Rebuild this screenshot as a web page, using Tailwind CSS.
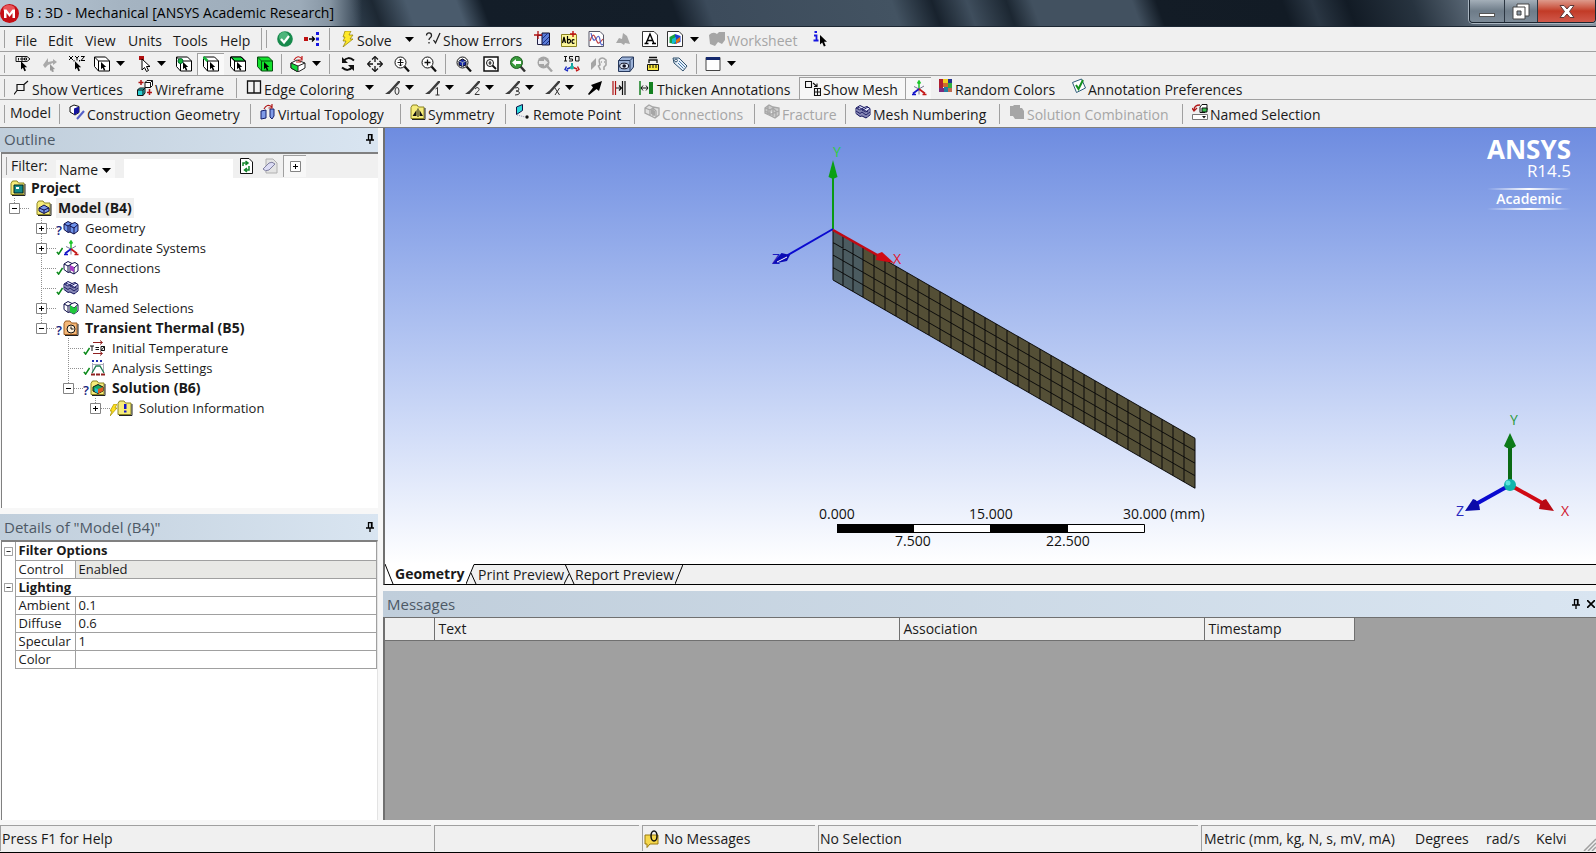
<!DOCTYPE html>
<html lang="en">
<head>
<meta charset="utf-8">
<title>B : 3D - Mechanical [ANSYS Academic Research]</title>
<script src="https://cdn.jsdelivr.net/npm/@tailwindcss/browser@4"></script>
</head>
<body class="flex min-h-screen flex-col bg-[#f0f0f0] font-['Open_Sans','Noto_Sans',sans-serif] text-[14px] leading-5 text-[#1a1a1a]">

<svg class="hidden" aria-hidden="true">
  <symbol id="drop" viewBox="0 0 9 5"><path d="M0 0h9L4.500 5z" fill="#000"/></symbol>
  <symbol id="cur" viewBox="0 0 8 12"><path d="M0 0v9.500l2.200-2 1.700 4 1.800-.8-1.700-3.900h3z" fill="#000"/></symbol>
  <symbol id="plus" viewBox="0 0 11 11"><path d="M.5.5h10v10H.5z" fill="#fff" stroke="#848484"/><path d="M3 5.500h5M5.500 3v5" stroke="#000"/></symbol>
  <symbol id="minus" viewBox="0 0 11 11"><path d="M.5.5h10v10H.5z" fill="#fff" stroke="#848484"/><path d="M3 5.500h5" stroke="#000"/></symbol>
  <symbol id="tick" viewBox="0 0 8 9"><path d="M1 5.500 3 8 7.500 1" fill="none" stroke="#0b8a1a" stroke-width="1.800"/></symbol>
  <symbol id="pin" viewBox="0 0 8 10"><path d="M2 .5h4v5M2.500 0v6M5.500 0v6M0 6h8M4 6v4" fill="none" stroke="#000" stroke-width="1.300"/></symbol>
  <symbol id="folder" viewBox="0 0 16 16"><path d="M1 3.500 2.500 1h4.500l1.500 2h5.500v11.500H1z" fill="#f6ec7a" stroke="#8a8320"/><path d="M15 4v11.500H2" fill="none" stroke="#222"/></symbol>
  <symbol id="cubes" viewBox="0 0 16 16"><path d="M1 4 5 1.500l4 2 3-1 3 2v6.500l-4 3-4-2-2 .5-4-3z" fill="currentColor" stroke="#10104a"/><path d="m1 4 4 2 4-2.500M5 6v6m2-6 4 2 4-3.500M11 8v6M7 5v7" fill="none" stroke="#10104a"/></symbol>
  <symbol id="meshcubes" viewBox="0 0 16 16"><path d="M1 4 5 1.500l4 2 3-1 3 2v6.500l-4 3-4-2-2 .5-4-3z" fill="#e4e6ff" stroke="#14145c"/><path d="m1 4 4 2 4-2.500M5 6v6m2-6 4 2 4-3.500M11 8v6M7 5v7M1 7l4 2.500L7 8l4 3 4-3M3 3v8M9 7v6M13 6v6M3 3l10 5M13 3 8 6" fill="none" stroke="#14145c" stroke-width=".9"/></symbol>
  <symbol id="triad" viewBox="0 0 16 16"><path d="M8 9V1M6.500 3.500 8 1l1.500 2.500" stroke="#1fc62c" stroke-width="1.500" fill="none"/><path d="M3 6.500 8 9l5-3M8 9v5.500" stroke="#668" stroke-width=".9" fill="none"/><path d="m8 9-6 4.500M1 14.500h4" stroke="#1414c8" stroke-width="1.700"/><path d="m8 9 6 4.500M11.500 14.500h4" stroke="#c41818" stroke-width="1.700"/></symbol>
  <symbol id="cubeframe" viewBox="0 0 16 16"><path d="M.5 1v9.500l4 4.500h11V5l-4-4z" fill="#fff" stroke="#000"/><path d="m.5 1 4 4h11M4.500 5v10" fill="none" stroke="#000"/></symbol>
  <symbol id="lens" viewBox="0 0 16 16"><circle cx="6.500" cy="6.500" r="5.500" fill="#fff" stroke="#111"/><path d="m10.500 10.500 4.500 5" stroke="#111" stroke-width="2.200"/></symbol>
  <symbol id="stroke" viewBox="0 0 16 16"><path d="M0 14h4.500L15 2.500V1h-2L4.500 10.500z" fill="#3c3c3c"/></symbol>
</svg>

<header class="flex h-[27px] shrink-0 items-start border-b border-[#1c2733] bg-[linear-gradient(to_right,#b9c8d6_0,#a5b4c2_120px,#9cabb9_300px,#8695a3_330px,#8695a300_362px),linear-gradient(70deg,#2f3e4d_335px,#1d2833_358px,#4a5b6c_390px,#4a5b6c_437px,#131d28_461px,#141e29_639px,#3c4b5b_672px,#435362_846px,#18222d_884px,#3f4e5d_917px,#1c2732_954px,#425160_978px,#425160_1072px,#131c26_1095px,#121b25_1213px,#2a3643_1241px,#121b25_1274px,#27333f_1335px,#5a6876_1390px,#8d98a3_100%)]">
  <svg class="mt-1 size-5 shrink-0" viewBox="0 0 20 20"><circle cx="9.500" cy="9.500" r="9.500" fill="#c40d14"/><ellipse cx="9" cy="5" rx="6" ry="4" fill="#e8555a"/><path d="M4 14V5.500h2.500l3 4 3-4H15V14h-2.500V9l-3 4-3-4v5z" fill="#fff"/></svg>
  <h1 class="ml-[5px] mt-[3px] flex-1 truncate text-[14px] text-black">B : 3D - Mechanical [ANSYS Academic Research]</h1>
  <div class="flex h-[23px] overflow-hidden rounded-b border border-t-0 border-[#1b2631] shadow-[0_0_0_1px_#a9b5c0]">
    <button aria-label="Minimize" class="flex w-[35px] items-end justify-center border-r border-[#2b3642] bg-linear-to-b from-[#a4afb9] via-[#6e7c89] to-[#7d8b98] pb-[5px]"><span class="h-[4px] w-4 border border-[#555] bg-white"></span></button>
    <button aria-label="Restore" class="flex w-[33px] items-center justify-center border-r border-[#2b3642] bg-linear-to-b from-[#a4afb9] via-[#6e7c89] to-[#7d8b98]"><svg class="h-[17px] w-[18px]" viewBox="0 0 18 17"><path d="M5 1h12v12H5z" fill="#fff" stroke="#444"/><path d="M1 4h12v12H1z" fill="#fff" stroke="#444"/><path d="M5 8h4v4H5z" fill="#8a97a3" stroke="#444"/></svg></button>
    <button aria-label="Close" class="flex w-[57px] items-center justify-center bg-linear-to-b from-[#dd9a8c] via-[#c23a26] to-[#d0584a]"><svg class="h-[13px] w-4" viewBox="0 0 16 13"><path d="M1 .5h4l3 3.500 3-3.500h4L10.500 6.500l4.500 6h-4L8 9l-3 3.500H1l4.500-6z" fill="#fff" stroke="#5b3a3a"/></svg></button>
  </div>
</header>

<!-- Menu and standard toolbar -->
<div class="flex h-[25px] shrink-0 items-center overflow-hidden border-b border-[#a0a0a0]">
  <span class="ml-1 h-[18px] w-px shrink-0 bg-[#a0a0a0]"></span>
  <nav class="ml-[10px] flex shrink-0 pt-1" aria-label="Menu">
    <button class="w-[33px] text-left">File</button><button class="w-[37px] text-left">Edit</button><button class="w-[43px] text-left">View</button><button class="w-[45px] text-left">Units</button><button class="w-[47px] text-left">Tools</button><button class="w-[41px] text-left">Help</button>
  </nav>
  <span class="h-[22px] w-px shrink-0 bg-[#a0a0a0]"></span><span class="ml-1 h-[18px] w-px shrink-0 bg-[#a0a0a0]"></span>
  <button aria-label="Solution status" class="ml-1 flex w-[27px] shrink-0 justify-center"><svg class="size-4" viewBox="0 0 16 16"><circle cx="8" cy="8" r="7.800" fill="#178a4c"/><circle cx="7" cy="6" r="5" fill="#4db67b"/><path d="m4 8 3 3.500L12 5" fill="none" stroke="#fff" stroke-width="2.200"/></svg></button>
  <button aria-label="Connections" class="flex w-[27px] shrink-0 justify-center"><svg class="size-4" viewBox="0 0 16 16"><path d="M0 6h4v4H0z" fill="#c01010"/><path d="M5 8h5M8 5.500 10.500 8 8 10.500" fill="none" stroke="#000" stroke-width="1.300"/><path d="M12 1h3v3h-3zM12 6.500h3v3h-3zM12 12h3v3h-3z" fill="#1515e0"/></svg></button>
  <span class="ml-1 h-[22px] w-px shrink-0 bg-[#a0a0a0]"></span>
  <button class="ml-[10px] flex w-[59px] shrink-0 items-center gap-px whitespace-nowrap"><svg class="size-4 shrink-0" viewBox="0 0 16 16"><path d="M5 0h6L9 4h4l-3 4h3L3 16l3-6H3l2-4H3z" fill="#ffe92b" stroke="#8d7b00" stroke-width=".7"/></svg><span class="pt-1">Solve</span></button>
  <button aria-label="Solve options" class="flex w-5 shrink-0 justify-center"><svg class="h-[5px] w-[9px]"><use href="#drop"/></svg></button>
  <button class="ml-1.5 flex w-[103px] shrink-0 items-center gap-0.5 whitespace-nowrap"><svg class="size-4 shrink-0" viewBox="0 0 16 16"><path d="M1.500 4.500c0-3.500 5-3.500 5 0C6.500 7 4 6.500 4 9M4 11v1.500M8.500 9l2 3 4.500-10" fill="none" stroke="#222" stroke-width="1.300"/></svg><span class="pt-1">Show Errors</span></button>
  <button aria-label="Section plane" class="flex w-[27px] shrink-0 justify-center"><svg class="size-4" viewBox="0 0 16 16"><path d="M3.500 4.500H9v9H3.500z" fill="#eef" stroke="#224"/><path d="M8 2h7.500v12H8z" fill="#5a7bd8" stroke="#113"/><path d="m8 8 6-6M8 13l7-7M11 14l4-4" stroke="#1a2f80"/><path d="M4 0v8M0 4h8" stroke="#b01010" stroke-width="1.300"/></svg></button>
  <button aria-label="Annotation" class="flex w-[27px] shrink-0 justify-center"><svg class="size-4" viewBox="0 0 16 16"><path d="M.5 3.500h15v12H.5z" fill="#fdf79a" stroke="#8a8320"/><path d="M1.500 12 3 6l1.500 6M2 10h2M6.500 5v7m0-3q3-1.500 3 1t-3 2M13.500 9q-2.500-1-2.500 1.500t2.500 1.500" fill="none" stroke="#000" stroke-width="1.200"/><path d="M12 0v6M9 3h6" stroke="#c01010" stroke-width="1.400"/></svg></button>
  <button aria-label="Chart" class="flex w-[27px] shrink-0 justify-center"><svg class="size-4" viewBox="0 0 16 16"><path d="M1 .5h11l3.500 3.500v11.500H1z" fill="#fff" stroke="#556"/><path d="M2 10Q5 1 7 6t3 6 5-4" fill="none" stroke="#c04040" stroke-width="1.200"/><path d="M3 2q2 10 5 6 3-6 4 1t3 4" fill="none" stroke="#5060c8" stroke-width="1.200"/></svg></button>
  <button aria-label="Comment" disabled class="flex w-[27px] shrink-0 justify-center"><svg class="size-4" viewBox="0 0 16 16"><path d="m1 12 3-5 3 1 1-6 4 3 3 8-5-1-1 2-3-2z" fill="#a8a8a8"/></svg></button>
  <button aria-label="Figure" class="flex w-[27px] shrink-0 justify-center"><svg class="size-4" viewBox="0 0 16 16"><path d="M.5.5H12l3.500 3.500v11.500H.5z" fill="#fff" stroke="#333"/><path d="M4 12.500 8 3l4 9.500M5.500 9.500h5M2.500 12.500h4M10 12.500h4" fill="none" stroke="#000" stroke-width="1.400"/></svg></button>
  <button aria-label="Image" class="flex w-6 shrink-0 justify-center"><svg class="size-4" viewBox="0 0 16 16"><path d="M.5.5H12l3.500 3.500v11.500H.5z" fill="#fff" stroke="#333"/><path d="m2.500 6 5.500-3v10l-5.500-1z" fill="#18a040"/><path d="m8 3 5.500 2v6L8 13z" fill="#2040d0"/><path d="m5 8 4-2v5l-4 2z" fill="#12bcd0"/><path d="m9 9 4-3v4l-4 3z" fill="#e07010"/></svg></button>
  <button aria-label="Image options" class="flex w-[14px] shrink-0 justify-center"><svg class="h-[5px] w-[9px]"><use href="#drop"/></svg></button>
  <button disabled class="ml-[7px] flex w-[94px] shrink-0 items-center gap-px whitespace-nowrap text-[#a6a6a6]"><svg class="h-4 w-[18px] shrink-0" viewBox="0 0 18 16"><path d="M1 4q4-4 8-1l2-2h6v8l-3 4-4-2-3 4-5-2z" fill="#a6a6a6"/></svg><span class="pt-1">Worksheet</span></button>
  <button aria-label="Selection information" class="ml-1 flex w-[27px] shrink-0 justify-center"><svg class="size-4" viewBox="0 0 16 16"><path d="M2.500 1H5M2 4.500h2.500v5M1.500 9.500h5" fill="none" stroke="#1515e0" stroke-width="1.800"/><use href="#cur" x="8" y="4" width="8" height="12"/></svg></button>
</div>

<!-- Graphics toolbar -->
<div class="flex h-6 shrink-0 items-center overflow-hidden border-b border-[#a0a0a0]">
  <span class="ml-1 h-[18px] w-px shrink-0 bg-[#a0a0a0]"></span>
  <button aria-label="Label" class="ml-1 flex w-[27px] shrink-0 justify-center"><svg class="size-4" viewBox="0 0 16 16"><path d="M1 .5h11l3 2.500-3 2.500H1zM3.500 2v2.500M6 2h2v2H6zM9.500 2h2v2h-2z" fill="none" stroke="#000" stroke-width=".9"/><use href="#cur" x="6" y="5" width="7" height="11"/></svg></button>
  <button aria-label="Direction" disabled class="flex w-[27px] shrink-0 justify-center"><svg class="size-4" viewBox="0 0 16 16"><path d="m1 9 5-7v4l5-1V3l4 3-4 3V7L6 9l-3 3z" fill="#aaa"/><path d="m8 8 5 5-2 .5 1 2-2 .5-1-2-1 1z" fill="#999"/></svg></button>
  <button aria-label="Coordinates" class="flex w-[27px] shrink-0 justify-center"><svg class="size-4" viewBox="0 0 16 16"><path d="m0 0 4 4M4 0 0 4M6 0l2 2 2-2M8 2v2.500M12 .5h3.500L12 4.500h4M5 4v1.500M10.500 4v1.500" fill="none" stroke="#000"/><use href="#cur" x="6" y="5" width="7" height="11"/></svg></button>
  <button aria-label="Select mode" class="flex w-6 shrink-0 justify-center"><svg class="size-4"><use href="#cubeframe"/><use href="#cur" x="7" y="6" width="6" height="9"/></svg></button>
  <button aria-label="Select mode options" class="flex w-3 shrink-0 justify-center"><svg class="h-[5px] w-[9px]"><use href="#drop"/></svg></button>
  <button aria-label="Select type" class="ml-[9px] flex w-5 shrink-0 justify-center"><svg class="size-4" viewBox="0 0 16 16"><path d="M2 0h5v4H2z" fill="#b01010"/><path d="M5 3v11l2.500-2.500 2 4 2-1-2-4H13z" fill="#fff" stroke="#000"/></svg></button>
  <button aria-label="Select type options" class="flex w-3 shrink-0 justify-center"><svg class="h-[5px] w-[9px]"><use href="#drop"/></svg></button>
  <button aria-label="Vertex" class="ml-[3px] flex w-[27px] shrink-0 justify-center"><svg class="size-4"><use href="#cubeframe"/><circle cx="4.500" cy="5" r="2.500" fill="#18b53a" stroke="#063"/><use href="#cur" x="7" y="6" width="6" height="9"/></svg></button>
  <button aria-label="Edge" aria-pressed="true" class="flex h-[22px] w-[27px] shrink-0 items-center justify-center border-l border-t border-[#a0a0a0] bg-[#f9f9f9]"><svg class="size-4"><use href="#cubeframe"/><path d="m.5 1 4 4" stroke="#18b53a" stroke-width="2.500"/><use href="#cur" x="7" y="6" width="6" height="9"/></svg></button>
  <button aria-label="Face" class="flex w-[27px] shrink-0 justify-center"><svg class="size-4"><use href="#cubeframe"/><path d="M1 1h10l4 4H5z" fill="#12d83a" stroke="#000"/><use href="#cur" x="7" y="6" width="6" height="9"/></svg></button>
  <button aria-label="Body" class="flex w-[27px] shrink-0 justify-center"><svg class="size-4" viewBox="0 0 16 16"><path d="M.5 1v9.500l4 4.500h11V5l-4-4z" fill="#12e02c" stroke="#064d10"/><path d="m.5 1 4 4h11M4.500 5v10" fill="none" stroke="#064d10"/><use href="#cur" x="7" y="6" width="6" height="9"/></svg></button>
  <span class="ml-[3px] h-5 w-px shrink-0 bg-[#a0a0a0]"></span>
  <button aria-label="Extend selection" class="ml-1 flex w-6 shrink-0 justify-center"><svg class="size-4" viewBox="0 0 16 16"><path d="m1 7 6-3 8 3v5l-7 4-7-4z" fill="#fff" stroke="#222"/><path d="m1 7 7 3v6l-7-4z" fill="#12d83a" stroke="#222"/><path d="M8 10l7-3" stroke="#222"/><path d="M4 4q4-6 8-1M12 0v4H8M6 6h5" fill="none" stroke="#c01818" stroke-width="1.200"/></svg></button>
  <button aria-label="Extend options" class="flex w-3 shrink-0 justify-center"><svg class="h-[5px] w-[9px]"><use href="#drop"/></svg></button>
  <span class="ml-[7px] h-5 w-px shrink-0 bg-[#a0a0a0]"></span>
  <button aria-label="Rotate" class="ml-1 flex w-[27px] shrink-0 justify-center"><svg class="size-4" viewBox="0 0 16 16"><path d="M3.500 5Q8-.5 14 4.500M12.500 11Q8 16.500 2 11.500" fill="none" stroke="#111" stroke-width="2"/><path d="M2 1v6h6zM14 15V9H8z" fill="#111"/></svg></button>
  <button aria-label="Pan" class="flex w-[27px] shrink-0 justify-center"><svg class="size-4" viewBox="0 0 16 16"><path d="M8 1v5M8 10v5M1 8h5M10 8h5" stroke="#111" stroke-width="1.300"/><path d="m5 3.500 3-3 3 3M5 12.500l3 3 3-3M3.500 5l-3 3 3 3M12.500 5l3 3-3 3" fill="none" stroke="#111" stroke-width="1.200"/></svg></button>
  <button aria-label="Zoom" class="flex w-[27px] shrink-0 justify-center"><svg class="size-4"><use href="#lens"/><path d="M6.500 3v7M3.500 6.500h6M5 4.500 6.500 3 8 4.500M5 8.500 6.500 10 8 8.500" fill="none" stroke="#111"/></svg></button>
  <button aria-label="Box zoom" class="flex w-[27px] shrink-0 justify-center"><svg class="size-4"><use href="#lens"/><path d="M6.500 3.500v6M3.500 6.500h6" stroke="#111" stroke-width="1.300"/></svg></button>
  <span class="ml-[3px] h-5 w-px shrink-0 bg-[#a0a0a0]"></span>
  <button aria-label="Zoom to fit" class="ml-1 flex w-[27px] shrink-0 justify-center"><svg class="size-4"><use href="#lens"/><path d="m3 5 3.500-2L10 5v4l-3.500 1.500L3 9z" fill="#1c2ca8" stroke="#001"/><path d="m3 5 3.500 1.500L10 5M6.500 6.500v4" fill="none" stroke="#9ab"/></svg></button>
  <button aria-label="Magnifier window" class="flex w-[27px] shrink-0 justify-center"><svg class="size-4" viewBox="0 0 16 16"><path d="M1 1h14v14H1z" fill="#fff" stroke="#111" stroke-width="1.500"/><circle cx="7" cy="7" r="3.500" fill="none" stroke="#111"/><path d="m9.500 9.500 3.500 3.500" stroke="#111" stroke-width="1.800"/><path d="M7 5v4M5.500 7h3" stroke="#111"/></svg></button>
  <button aria-label="Previous view" class="flex w-[27px] shrink-0 justify-center"><svg class="size-4" viewBox="0 0 16 16"><path d="m10.500 10.500 4.500 5" stroke="#333" stroke-width="2.400"/><circle cx="6.500" cy="6.500" r="6" fill="#3a9a3c" stroke="#1d5c20"/><path d="M2 6.500 6 3v2h5v3H6v2z" fill="#fff"/></svg></button>
  <button aria-label="Next view" disabled class="flex w-[27px] shrink-0 justify-center"><svg class="size-4" viewBox="0 0 16 16"><path d="m10.500 10.500 4.500 5" stroke="#a5a5a5" stroke-width="2.400"/><circle cx="6.500" cy="6.500" r="6" fill="#a5a5a5"/><path d="M11 6.500 7 3v2H2v3h5v2z" fill="#e8e8e8"/></svg></button>
  <button aria-label="Isometric view" class="flex w-[27px] shrink-0 justify-center"><svg class="size-4" viewBox="0 0 16 16"><path d="M1.500.5v4.500M0 .5h3M0 5h3M9 .5H5.500V3H8.500v2H5M11.500.5h3.500V5h-3.500z" fill="none" stroke="#111"/><path d="M8 11V7" stroke="#12a0a0" stroke-width="2"/><path d="m8 11-5 2M2.500 10.500l-1.500 3 3 1.500" stroke="#1a2ac0" fill="none" stroke-width="1.400"/><path d="m8 11 5 2M13.500 10.500l1.500 3-3 1.500" stroke="#c01818" fill="none" stroke-width="1.400"/><circle cx="8" cy="11.500" r="2" fill="#18b8a8"/></svg></button>
  <button aria-label="Look at" disabled class="flex w-[27px] shrink-0 justify-center"><svg class="size-4" viewBox="0 0 16 16"><path d="m0 7 5-5v7l-5 5z" fill="#a5a5a5"/><path d="M8 4q3-4 7 0v5l-2 2v3M8 4l1 5-1.500 1 2 4M10 6h1M13 6h1" fill="none" stroke="#a5a5a5" stroke-width="1.600"/></svg></button>
  <button aria-label="Manage views" class="flex w-[27px] shrink-0 justify-center"><svg class="size-4" viewBox="0 0 16 16"><path d="M.5 4.500 4 1h11.500v10L12 15.500H.5z" fill="#9db3d8" stroke="#26385c"/><path d="M.5 4.500H12v11M12 4.500 15.500 1" fill="none" stroke="#26385c"/><ellipse cx="6.200" cy="10" rx="4.500" ry="2.800" fill="#dfe8f7" stroke="#112"/><circle cx="6.200" cy="10" r="1.800" fill="#112"/></svg></button>
  <button aria-label="Rescale annotation" class="flex w-[27px] shrink-0 justify-center"><svg class="size-4" viewBox="0 0 16 16"><path d="M4 7V4h8v3M4 1.500h8" fill="none" stroke="#111" stroke-width="1.300"/><path d="M2.500 8.500h11v6h-11z" fill="#fbe93c" stroke="#111"/><path d="M5 9v3M8 9v3M11 9v3" stroke="#111"/></svg></button>
  <button aria-label="Tags" class="flex w-[27px] shrink-0 justify-center"><svg class="size-4" viewBox="0 0 16 16"><path d="m1 2 6 0 8 8-4 5-9-8z" fill="#e7f1fb" stroke="#30506c"/><circle cx="4" cy="4.500" r="1.400" fill="#fff" stroke="#30506c"/><path d="m7 5 6 6M6 7l5.500 5.500" stroke="#4a7aa8"/></svg></button>
  <span class="ml-[3px] h-5 w-px shrink-0 bg-[#a0a0a0]"></span>
  <button aria-label="Viewports" class="ml-1 flex w-6 shrink-0 justify-center"><svg class="size-4" viewBox="0 0 16 16"><path d="M1 1.500h14v13H1z" fill="#fff" stroke="#444"/><path d="M1 1h14v3H1z" fill="#14286c"/></svg></button>
  <button aria-label="Viewport options" class="flex w-3 shrink-0 justify-center"><svg class="h-[5px] w-[9px]"><use href="#drop"/></svg></button>
</div>

<!-- Edge graphics toolbar -->
<div class="flex h-6 shrink-0 items-center overflow-hidden whitespace-nowrap border-b border-[#a0a0a0]">
  <span class="ml-1 h-[18px] w-px shrink-0 bg-[#a0a0a0]"></span>
  <button class="ml-[9px] flex w-[123px] shrink-0 items-center gap-0.5"><svg class="size-4 shrink-0" viewBox="0 0 16 16"><path d="M3 4.500h7v6H3zM10 4.500l4-3.500M0 14.500l3-4" fill="none" stroke="#111" stroke-width="1.200"/></svg><span class="pt-1">Show Vertices</span></button>
  <button class="flex w-[95px] shrink-0 items-center gap-0.5"><svg class="size-4 shrink-0" viewBox="0 0 16 16"><path d="M8 2.500 10 .5h5.500v5l-2 2H8zM8 2.500h5.500v5M13.500 2.500l2-2" fill="#fff" stroke="#111"/><path d="m.5 10 2-2H8v5l-2 2.500H.5z" fill="#2ad0d4" stroke="#111"/><path d="M.5 10H6v5.500M6 10l2-2" fill="none" stroke="#111"/><path d="M4 0v5M1.500 2.500h5M12.500 9v6M10 12.500h5" stroke="#b01414" stroke-width="1.500"/></svg><span class="pt-1">Wireframe</span></button>
  <span class="ml-1 h-5 w-px shrink-0 bg-[#a0a0a0]"></span>
  <button class="ml-[9px] flex w-[117px] shrink-0 items-center gap-0.5"><svg class="mb-0.5 size-4 shrink-0" viewBox="0 0 16 16"><path d="M1.500 2h13v12h-13zM8 2v12" fill="none" stroke="#111" stroke-width="1.300"/></svg><span class="pt-1">Edge Coloring</span></button>
  <button aria-label="Edge coloring options" class="flex w-3 shrink-0 justify-center"><svg class="h-[5px] w-[9px]"><use href="#drop"/></svg></button>
  <button aria-label="Edges with no faces" class="ml-[7px] flex w-[21px] shrink-0 justify-center"><svg class="size-4"><use href="#stroke"/><ellipse cx="12" cy="11" rx="2" ry="3.500" fill="none" stroke="#333"/></svg></button><button aria-label="Options" class="flex w-3 shrink-0 justify-center"><svg class="h-[5px] w-[9px]"><use href="#drop"/></svg></button>
  <button aria-label="Edges with one face" class="ml-[7px] flex w-[21px] shrink-0 justify-center"><svg class="size-4"><use href="#stroke"/><path d="m10.500 9 2-1.500V15M10.500 15h4" fill="none" stroke="#333"/></svg></button><button aria-label="Options" class="flex w-3 shrink-0 justify-center"><svg class="h-[5px] w-[9px]"><use href="#drop"/></svg></button>
  <button aria-label="Edges with two faces" class="ml-[7px] flex w-[21px] shrink-0 justify-center"><svg class="size-4"><use href="#stroke"/><path d="M10 9q2-3 4-.5c1 2-3 4-4 6h4.500" fill="none" stroke="#333"/></svg></button><button aria-label="Options" class="flex w-3 shrink-0 justify-center"><svg class="h-[5px] w-[9px]"><use href="#drop"/></svg></button>
  <button aria-label="Edges with three faces" class="ml-[7px] flex w-[21px] shrink-0 justify-center"><svg class="size-4"><use href="#stroke"/><path d="M10 8q4-1.500 4 1t-3 2q3.500 0 3.500 2t-4.500 2" fill="none" stroke="#333"/></svg></button><button aria-label="Options" class="flex w-3 shrink-0 justify-center"><svg class="h-[5px] w-[9px]"><use href="#drop"/></svg></button>
  <button aria-label="Edges with many faces" class="ml-[7px] flex w-[21px] shrink-0 justify-center"><svg class="size-4"><use href="#stroke"/><path d="m10 8 4.500 7M14.500 8 10 15" fill="none" stroke="#333"/></svg></button><button aria-label="Options" class="flex w-3 shrink-0 justify-center"><svg class="h-[5px] w-[9px]"><use href="#drop"/></svg></button>
  <button aria-label="Thick arrow" class="ml-1.5 flex w-[27px] shrink-0 justify-center"><svg class="size-4" viewBox="0 0 16 16"><path d="m15 1-3 10-2.500-2L2 15l-1-1 5-6.500L4 5z" fill="#000"/></svg></button>
  <button aria-label="Edge direction" class="flex w-[21px] shrink-0 justify-center"><svg class="size-4" viewBox="0 0 16 16"><path d="M2 1v14M4.500 1v14" stroke="#b01414" stroke-width="1.200"/><path d="M11.500 1v14M14 1v14M5 8h5M8 5.500 10.500 8 8 10.500" fill="none" stroke="#111" stroke-width="1.200"/></svg></button>
  <button class="ml-[9px] flex w-[161px] shrink-0 items-center gap-[3px]"><svg class="size-4 shrink-0" viewBox="0 0 16 16"><path d="M2 1v14" stroke="#148020" stroke-width="1.500"/><path d="M3 8h7M5 5.500 3 8l2 2.500M8 5.500 10 8l-2 2.500" fill="none" stroke="#111"/><path d="M11 2h4v12h-4z" fill="#148020"/></svg><span class="pt-1">Thicken Annotations</span></button>
  <button aria-pressed="true" class="flex h-[22px] w-[106px] shrink-0 items-center gap-0.5 border-l border-t border-[#a0a0a0] bg-[#f7f7f7] pl-[5px]"><svg class="size-4 shrink-0" viewBox="0 0 16 16"><path d="M.5 1.500h6v6h-6zM9.500 8.500h6v7h-6zM9.500 12h6M12.500 8.500v7M8 3l4 3.500M12 3.500v3H9" fill="none" stroke="#111" stroke-width="1.100"/></svg><span class="pt-1">Show Mesh</span></button>
  <button aria-label="Show coordinate systems" aria-pressed="true" class="flex h-[22px] w-[26px] shrink-0 items-center justify-center border-l border-t border-[#a0a0a0] bg-[#f7f7f7]"><svg class="size-4"><use href="#triad"/></svg></button>
  <button class="ml-2 flex w-[132px] shrink-0 items-center gap-[3px]"><svg class="mb-1 size-[13px] shrink-0" viewBox="0 0 13 13"><path d="M0 0h4v13H0z" fill="#b02030"/><path d="M4 0h5v4H4z" fill="#f0d020"/><path d="M9 0h4v4H9z" fill="#203090"/><path d="M4 4h5v4H4z" fill="#d06a30"/><path d="M9 4h4v5H9z" fill="#30b040"/><path d="M0 9h5v4H0z" fill="#7a2a80"/><path d="M5 8h4v5H5z" fill="#2080a0"/><path d="M9 9h4v4H9z" fill="#c06a50"/></svg><span class="pt-1">Random Colors</span></button>
  <button class="flex shrink-0 items-center gap-px"><svg class="mb-1 size-4 shrink-0" viewBox="0 0 16 16"><path d="m1.500 4.500 9-3.500 4 9-9 4.500z" fill="#fff" stroke="#2a5a78"/><path d="m5 7 2.500 4L12 2" fill="none" stroke="#12901e" stroke-width="2"/></svg><span class="pt-1">Annotation Preferences</span></button>
</div>

<!-- Context toolbar -->
<div class="flex h-[28px] shrink-0 items-center overflow-hidden whitespace-nowrap border-b border-[#808080]">
  <span class="ml-1 h-[18px] w-px shrink-0 bg-[#a0a0a0]"></span>
  <span class="ml-[5px] w-[49px] shrink-0 pb-0.5">Model</span>
  <span class="h-5 w-px shrink-0 bg-[#a0a0a0]"></span>
  <button class="ml-[9px] flex w-[181px] shrink-0 items-center gap-0.5"><svg class="mb-1 size-4 shrink-0" viewBox="0 0 16 16"><path d="m1 3 4-2 5 1.500v6L6 11 1 8z" fill="#fff" stroke="#111"/><path d="m5 4.500 5-2v6L5 11z" fill="#1414a0"/><path d="m8 15 7-8" stroke="#5560c8" stroke-width="2"/></svg><span class="pt-[3px]">Construction Geometry</span></button>
  <span class="h-5 w-px shrink-0 bg-[#a0a0a0]"></span>
  <button class="ml-[9px] flex w-[140px] shrink-0 items-center gap-0.5"><svg class="mb-1 size-4 shrink-0" viewBox="0 0 16 16"><path d="m1 7 5-1v8l-5 1zM10 5l4 0v7l-2 3-2-2z" fill="#7f9be8" stroke="#14206c"/><path d="M4 5q3-6 8-2M12 0v4H8.500" fill="none" stroke="#b01818" stroke-width="1.200"/></svg><span class="pt-[3px]">Virtual Topology</span></button>
  <span class="h-5 w-px shrink-0 bg-[#a0a0a0]"></span>
  <button class="ml-[9px] flex w-[95px] shrink-0 items-center gap-0.5"><svg class="mb-1 size-4 shrink-0"><use href="#folder"/><path d="m2.500 12 4-6v6zM13 12 9.500 6v6z" fill="#111"/><path d="M8 4.500V13" stroke="#111"/></svg><span class="pt-[3px]">Symmetry</span></button>
  <span class="h-5 w-px shrink-0 bg-[#a0a0a0]"></span>
  <button class="ml-[9px] flex w-[119px] shrink-0 items-center gap-0.5"><svg class="mb-1 size-4 shrink-0" viewBox="0 0 16 16"><path d="m1.500 3 6-2.500v6l-6 4z" fill="#2ad8dc" stroke="#114"/><path d="m2 11 8 2" stroke="#88a" stroke-dasharray="1 1"/><circle cx="12" cy="13" r="1.700" fill="#111"/></svg><span class="pt-[3px]">Remote Point</span></button>
  <span class="h-5 w-px shrink-0 bg-[#a0a0a0]"></span>
  <button disabled class="ml-[9px] flex w-[110px] shrink-0 items-center gap-0.5 text-[#a6a6a6]"><svg class="mb-1 size-4 shrink-0" viewBox="0 0 16 16"><path d="m1 4 4-3 4 2 6 1v7l-4 3-4-2-6-3zM1 4l5 2v6M9 3v9M6 6l3-2 3 3v6" fill="#e0e0e0" stroke="#a6a6a6" stroke-width="1.300"/><path d="m7 5 4 2v5l-4-2z" fill="#a6a6a6"/></svg><span class="pt-[3px]">Connections</span></button>
  <span class="h-5 w-px shrink-0 bg-[#a0a0a0]"></span>
  <button disabled class="ml-[9px] flex w-[81px] shrink-0 items-center gap-0.5 text-[#a6a6a6]"><svg class="mb-1 size-4 shrink-0" viewBox="0 0 16 16"><path d="m1 4 4-3 4 2 6 1v7l-4 3-4-2-6-3zM1 4l5 2v6M9 3v9M6 6l3-2 3 3v6M1 7l6 3 8-3M4 2v9" fill="#ccc" stroke="#a6a6a6" stroke-width="1.300"/></svg><span class="pt-[3px]">Fracture</span></button>
  <span class="h-5 w-px shrink-0 bg-[#a0a0a0]"></span>
  <button class="ml-[9px] flex w-[144px] shrink-0 items-center gap-0.5"><svg class="mb-1 size-4 shrink-0"><use href="#meshcubes"/></svg><span class="pt-[3px]">Mesh Numbering</span></button>
  <span class="h-5 w-px shrink-0 bg-[#a0a0a0]"></span>
  <button disabled class="ml-[9px] flex w-[173px] shrink-0 items-center gap-0.5 text-[#a6a6a6]"><svg class="mb-1 size-4 shrink-0" viewBox="0 0 16 16"><path d="M1 2h3l1-1h6v3h2l2 3v8H6l-2-3H1z" fill="#a6a6a6"/></svg><span class="pt-[3px]">Solution Combination</span></button>
  <span class="h-5 w-px shrink-0 bg-[#a0a0a0]"></span>
  <button class="ml-[9px] flex shrink-0 items-center gap-0.5"><svg class="mb-1 size-4 shrink-0" viewBox="0 0 16 16"><path d="m8 3 2-2.500h5V6l-2 2.500H8z" fill="#fff" stroke="#111"/><path d="M10 4h5v4h-5z" fill="#38c050" stroke="#111"/><path d="M8 1Q2 1 2 6M0 4l2 3 3-3" fill="none" stroke="#b01818" stroke-width="1.300"/><path d="M.5 10.500h15v5H.5z" fill="#fff" stroke="#777"/><path d="M10 12h4l-2 2.500z" fill="#111"/></svg><span class="pt-[3px]">Named Selection</span></button>
</div>

<div class="flex min-h-0 flex-1 bg-[#f7f7f7] pb-[5px]">
  <aside class="flex w-[378px] shrink-0 flex-col">
    <section class="flex h-[380px] flex-col">
      <div class="flex h-6 shrink-0 items-center justify-between bg-linear-to-r from-[#c0cedb] to-[#d9e5f1] px-1 pb-0.5"><h2 class="text-[15px] text-[#4d5966]">Outline</h2><button aria-label="Pin outline"><svg class="h-[10px] w-2"><use href="#pin"/></svg></button></div>
      <div class="ml-px flex-1 border-l border-t-2 border-[#808080] bg-white">
        <div class="flex h-6 items-center bg-[#f0f0f0]">
          <span class="ml-1 h-[18px] w-px bg-[#a0a0a0]"></span>
          <label for="fkind" class="ml-1 w-[45px]">Filter:</label>
          <div class="relative mt-1.5 h-[18px] w-[59px] overflow-hidden bg-[#f8f8f8]">
            <select id="fkind" class="h-[18px] w-full appearance-none bg-transparent pl-[3px] leading-[18px] outline-none"><option>Name</option></select>
            <svg class="pointer-events-none absolute right-[4px] top-[8px] h-[5px] w-[9px]"><use href="#drop"/></svg>
          </div>
          <input type="text" aria-label="Filter text" class="ml-[9px] mt-1 h-[19px] w-[109px] bg-white px-1 outline-none">
          <button aria-label="Refresh" class="ml-[5px] flex w-4"><svg class="size-4" viewBox="0 0 16 16"><path d="M2.500.5H11L14.500 4v11.500h-12z" fill="#fff" stroke="#111"/><path d="M5 8V5h4M7.500 3 10 5 7.500 7M11 8v4H7M9 10l-2.500 2L9 14" fill="none" stroke="#12852a" stroke-width="1.500"/></svg></button>
          <button aria-label="Clear filter" class="ml-2 flex w-4"><svg class="size-4" viewBox="0 0 16 16"><path d="M4 1h7l4 4v10H4z" fill="#e4e4e4" stroke="#b0b0b0"/><path d="m1 11 6-6q3-2 6 1l-6 6q-4 2-6-1z" fill="#dcdcf4" stroke="#8080a0"/></svg></button>
          <button aria-label="Expand all" aria-pressed="true" class="ml-[5px] flex h-[22px] w-[23px] items-center justify-center border-l border-t border-[#a0a0a0] bg-[#f7f7f7]"><svg class="size-[11px]"><use href="#plus"/></svg></button>
        </div>
        <div class="relative text-[13px]">
          <svg class="absolute left-0 top-0 h-[240px] w-[120px]" viewBox="0 0 120 240" fill="none" stroke="#909090" stroke-dasharray="1 1" shape-rendering="crispEdges"><path d="M12.500 20v10M12 30.500h16M39.500 40v110M39 50.500h16M39 70.500h16M39 90.500h16M39 110.500h16M39 130.500h16M39 150.500h16M66.500 160v50M66 170.500h16M66 190.500h16M66 210.500h16M93.500 220v10M93 230.500h16"/></svg>
          <ul class="relative">
            <li class="flex h-5 items-center pl-2"><svg class="size-4"><use href="#folder"/><path d="M4 5h9v8H4z" fill="#128a88" stroke="#022"/><path d="M6 7h3v2H6z" fill="#fff"/></svg><b class="ml-[5px] text-[14px]">Project</b></li>
            <li class="flex h-5 items-center pl-[7px]"><button aria-label="Collapse Model"><svg class="size-[11px]"><use href="#minus"/></svg></button><svg class="ml-4 size-4"><use href="#folder"/><path d="m3 8 5-3 5 3v3l-5 2.500L3 11z" fill="#7a98e8" stroke="#10104a"/><path d="m3 8 5 2 5-2M8 10v3" stroke="#10104a" fill="none"/></svg><b class="ml-1 bg-[#f0f0f0] px-0.5 text-[14px] leading-5">Model (B4)</b></li>
            <li class="flex h-5 items-center pl-[34px]"><button aria-label="Expand Geometry"><svg class="size-[11px]"><use href="#plus"/></svg></button><b class="ml-[9px] mt-1 w-[7px] font-semibold leading-4 text-[#14247c]">?</b><svg class="size-4 text-[#6f92ea]"><use href="#cubes"/></svg><span class="ml-1.5">Geometry</span></li>
            <li class="flex h-5 items-center pl-[34px]"><button aria-label="Expand Coordinate Systems"><svg class="size-[11px]"><use href="#plus"/></svg></button><svg class="ml-[9px] mt-1.5 h-2 w-[7px]"><use href="#tick"/></svg><svg class="size-4"><use href="#triad"/></svg><span class="ml-1.5">Coordinate Systems</span></li>
            <li class="flex h-5 items-center pl-[54px]"><svg class="mt-1.5 h-2 w-[7px]"><use href="#tick"/></svg><svg class="size-4 text-white"><use href="#cubes"/><path d="m7 5 4 2v5l-4-2z" fill="#a83cc8"/></svg><span class="ml-1.5">Connections</span></li>
            <li class="flex h-5 items-center pl-[54px]"><svg class="mt-1.5 h-2 w-[7px]"><use href="#tick"/></svg><svg class="size-4"><use href="#meshcubes"/></svg><span class="ml-1.5">Mesh</span></li>
            <li class="flex h-5 items-center pl-[34px]"><button aria-label="Expand Named Selections"><svg class="size-[11px]"><use href="#plus"/></svg></button><svg class="ml-4 size-4 text-white"><use href="#cubes"/><path d="m7 5 4 3v6l-4-2zM11 8l3-2v5l-3 3z" fill="#20c83c"/></svg><span class="ml-1.5">Named Selections</span></li>
            <li class="flex h-5 items-center pl-[34px]"><button aria-label="Collapse Transient Thermal"><svg class="size-[11px]"><use href="#minus"/></svg></button><b class="ml-[9px] mt-1 w-[7px] font-semibold leading-4 text-[#14247c]">?</b><svg class="size-4" viewBox="0 0 16 16"><path d="M1 3.500 2.500 1h4.500l1.500 2h5.500v11.500H1z" fill="#f5b878" stroke="#9a5a20"/><path d="M15 4v11.500H2" fill="none" stroke="#222"/><circle cx="8" cy="9" r="4" fill="#fff0d8" stroke="#111"/><path d="M8 6.500V9h2.500" fill="none" stroke="#111"/></svg><b class="ml-1.5 text-[14px]">Transient Thermal (B5)</b></li>
            <li class="flex h-5 items-center pl-[81px]"><svg class="mt-1.5 h-2 w-[7px]"><use href="#tick"/></svg><svg class="size-4" viewBox="0 0 16 16"><path d="M3 2.500h9M10 .5l2.500 2-2.500 2M3 13.500h9M10 11.500l2.500 2-2.500 2" fill="none" stroke="#902020"/><path d="M0 6h4M2 6v5M5.500 7.500h3.500M5.500 9.500h3.500M11 6.500h3.500v4H11zM11 10.500l3.500-4" fill="none" stroke="#111"/></svg><span class="ml-1.5">Initial Temperature</span></li>
            <li class="flex h-5 items-center pl-[81px]"><svg class="mt-1.5 h-2 w-[7px]"><use href="#tick"/></svg><svg class="size-4" viewBox="0 0 16 16"><path d="M2 1h12" stroke="#2030b0" stroke-width="2" stroke-dasharray="2 2"/><path d="M2.500 3v10M13.500 3v10M2 4.500h12" stroke="#aab" fill="none"/><path d="M2 13 6 6h4l4 7" fill="none" stroke="#207a50" stroke-width="1.300"/><path d="M1 14.500h14" stroke="#902020" stroke-width="2" stroke-dasharray="4 1"/></svg><span class="ml-1.5">Analysis Settings</span></li>
            <li class="flex h-5 items-center pl-[61px]"><button aria-label="Collapse Solution"><svg class="size-[11px]"><use href="#minus"/></svg></button><b class="ml-[9px] mt-1 w-[7px] font-semibold leading-4 text-[#14247c]">?</b><svg class="size-4"><use href="#folder"/><path d="m3 7 5-2.500L13 7v4l-5 2.500L3 11z" fill="#18a860" stroke="#111"/><path d="m8 9 5-2v4l-5 2.500z" fill="#e05a20"/><path d="m5 8 3 1v4l-3-1z" fill="#20b8d8"/></svg><b class="ml-1.5 text-[14px]">Solution (B6)</b></li>
            <li class="flex h-5 items-center pl-[88px]"><button aria-label="Expand Solution Information"><svg class="size-[11px]"><use href="#plus"/></svg></button><svg class="ml-[9px] mt-1 h-3 w-[7px]" viewBox="0 0 7 12"><path d="M4 0h3L5 4h2L0 12l2-5H0z" fill="#ffe020" stroke="#a89000" stroke-width=".7"/></svg><svg class="size-4"><use href="#folder"/><path d="M7 4h2.500v5H7zM7 10.500h2.500v2H7z" fill="#1414c8"/></svg><span class="ml-1.5">Solution Information</span></li>
          </ul>
        </div>
      </div>
    </section>
    <section class="mt-1.5 flex flex-1 flex-col">
      <div class="flex h-[26px] shrink-0 items-center justify-between bg-linear-to-r from-[#c0cedb] to-[#d9e5f1] px-1"><h2 class="text-[15px] text-[#4d5966]">Details of "Model (B4)"</h2><button aria-label="Pin details"><svg class="h-[10px] w-2"><use href="#pin"/></svg></button></div>
      <div class="ml-px flex-1 border-l border-r border-t-2 border-[#808080] border-r-[#e3e3e3] bg-white">
        <table class="w-full table-fixed border-collapse text-[13px] leading-[17px]">
          <colgroup><col class="w-[13px]"><col class="w-[60px]"><col></colgroup>
          <tbody>
            <tr class="h-[18px]"><td class="border-r border-[#a0a0a0] p-0"><button aria-label="Collapse Filter Options" class="ml-[2px] block"><svg class="size-[9px]"><use href="#minus"/></svg></button></td><th colspan="2" class="border-b border-r border-[#a0a0a0] p-0 pl-[3px] text-left font-bold">Filter Options</th></tr>
            <tr class="h-[18px]"><td class="border-r border-[#a0a0a0] p-0"></td><td class="border-b border-r border-[#a0a0a0] p-0 pl-[3px]">Control</td><td class="border-b border-r border-[#a0a0a0] bg-[#e8e8e5] p-0 pl-[3px]">Enabled</td></tr>
            <tr class="h-[18px]"><td class="border-r border-[#a0a0a0] p-0"><button aria-label="Collapse Lighting" class="ml-[2px] block"><svg class="size-[9px]"><use href="#minus"/></svg></button></td><th colspan="2" class="border-b border-r border-[#a0a0a0] p-0 pl-[3px] text-left font-bold">Lighting</th></tr>
            <tr class="h-[18px]"><td class="border-r border-[#a0a0a0] p-0"></td><td class="border-b border-r border-[#a0a0a0] p-0 pl-[3px]">Ambient</td><td class="border-b border-r border-[#a0a0a0] p-0 pl-[3px]">0.1</td></tr>
            <tr class="h-[18px]"><td class="border-r border-[#a0a0a0] p-0"></td><td class="border-b border-r border-[#a0a0a0] p-0 pl-[3px]">Diffuse</td><td class="border-b border-r border-[#a0a0a0] p-0 pl-[3px]">0.6</td></tr>
            <tr class="h-[18px]"><td class="border-r border-[#a0a0a0] p-0"></td><td class="border-b border-r border-[#a0a0a0] p-0 pl-[3px]">Specular</td><td class="border-b border-r border-[#a0a0a0] p-0 pl-[3px]">1</td></tr>
            <tr class="h-[18px]"><td class="border-r border-[#a0a0a0] p-0"></td><td class="border-b border-r border-[#a0a0a0] p-0 pl-[3px]">Color</td><td class="border-b border-r border-[#a0a0a0] p-0 pl-[3px]"></td></tr>
          </tbody>
        </table>
      </div>
    </section>
  </aside>

  <main class="ml-[5px] flex min-w-0 flex-1 flex-col">
    <div class="relative h-[436px] shrink-0 overflow-hidden border-l-2 border-[#707070] bg-linear-to-b from-[#6e8ce0] to-white">
      <!-- Meshed plate, local axes and ruler -->
      <svg class="absolute left-0 top-0 h-[436px] w-[840px] text-[14px]" viewBox="385 128 840 436">
        <g transform="matrix(1 .575 0 1 833 230)">
          <path d="M0 0h362v50H0z" fill="#544f36"/><path d="M0 0h30v50H0z" fill="#4b5b60"/>
          <path d="M0 0V50M10 0V50M20 0V50M30 0V50M41 0V50M52 0V50M63 0V50M74 0V50M85 0V50M96 0V50M107 0V50M118 0V50M130 0V50M141 0V50M152 0V50M163 0V50M174 0V50M185 0V50M196 0V50M207 0V50M218 0V50M229 0V50M240 0V50M251 0V50M262 0V50M273 0V50M284 0V50M295 0V50M307 0V50M318 0V50M329 0V50M340 0V50M351 0V50M362 0V50M0 0H362M0 12.500H362M0 25H362M0 37.500H362M0 50H362" fill="none" stroke="#0a0a0a"/>
        </g>
        <path d="M833 229v-52" stroke="#0a9a14" stroke-width="2"/><path d="m833 160 4.500 17-4.500 2-4.500-2z" fill="#0aa014"/>
        <path d="m833 229-52 30" stroke="#0a0ad0" stroke-width="2"/><path d="m772 264 9.500-11 8.500 2-3 6z" fill="#0a0ab4"/><path d="m777 262 10-5" stroke="#fff"/>
        <path d="m833 230 46 26" stroke="#c00a14" stroke-width="2.500"/><path d="m894 263-18-3 1-6 5-2z" fill="#d00a14"/>
        <text x="833" y="157" fill="#2ecc40">Y</text><text x="772" y="264" fill="#1a1ac0">Z</text><text x="893" y="264" fill="#e0142c">X</text>
        <path d="M837.500 524.500h307v8h-307z" fill="#fff" stroke="#000"/><path d="M837 524h77v9h-77zM990 524h78v9h-78z" fill="#000"/>
        <g fill="#111"><text x="819" y="519">0.000</text><text x="969" y="519">15.000</text><text x="1123" y="519">30.000 (mm)</text><text x="895" y="546">7.500</text><text x="1046" y="546">22.500</text></g>
      </svg>
      <!-- Global triad -->
      <svg class="absolute bottom-[38px] right-[20px] h-[120px] w-[130px] text-[14px]" viewBox="1446 406 130 120">
        <path d="M1510 485v-40" stroke="#0a6a14" stroke-width="4"/><path d="m1510 433 6 13q-6 5-12 0z" fill="#0c7a18"/>
        <path d="m1510 485-34 19" stroke="#0a0ad0" stroke-width="4"/><path d="m1465 511 8-12q6 1 7 11z" fill="#0a0aa8"/>
        <path d="m1510 485 34 19" stroke="#d00a14" stroke-width="4"/><path d="m1554 511-8-12q-6 1-7 10z" fill="#b80a14"/>
        <circle cx="1510" cy="485" r="6" fill="#12b4ac"/><circle cx="1508" cy="483" r="2.500" fill="#5ce4dc"/>
        <text x="1510" y="425" fill="#2a9a3c">Y</text><text x="1456" y="516" fill="#2a2ac0">Z</text><text x="1561" y="516" fill="#d0142c">X</text>
      </svg>
      <div class="absolute right-[25px] top-2 flex w-[84px] flex-col text-white">
        <span class="text-right text-[26px] font-bold leading-[26px]">ANSYS</span>
        <span class="text-right text-[17px] leading-[18px]">R14.5</span>
        <span class="mt-2 h-[2px] bg-linear-to-r from-transparent via-white to-transparent"></span>
        <span class="text-center text-[14px] font-semibold leading-[18px]">Academic</span>
        <span class="h-[2px] bg-linear-to-r from-transparent via-white to-transparent"></span>
      </div>
    </div>
    <!-- View tabs -->
    <div role="tablist" class="flex h-[21px] shrink-0 border-b border-l-2 border-black border-l-[#707070] bg-[#f0f0f0] text-[14px] leading-5">
      <svg class="h-5 w-[9px] bg-white" viewBox="0 0 9 20"><path d="m0 0 8 20" stroke="#000" fill="none"/></svg>
      <button role="tab" aria-selected="true" class="w-[72px] whitespace-nowrap bg-white pl-px text-left font-bold">Geometry</button>
      <svg class="h-5 w-[12px]" viewBox="0 0 12 20"><path d="M0 0h8L0 20z" fill="#fff"/><path d="M0 20 8 .5h4M5 9l5 11" stroke="#000" fill="none"/></svg>
      <button role="tab" class="w-[86px] whitespace-nowrap border-t border-black text-left leading-[19px]">Print Preview</button>
      <svg class="h-5 w-[11px]" viewBox="0 0 11 20"><path d="M0 .5h11M0 20l5-10M1 0l9 20" stroke="#000" fill="none"/></svg>
      <button role="tab" class="w-[100px] whitespace-nowrap border-t border-black text-left leading-[19px]">Report Preview</button>
      <svg class="h-5 w-[8px]" viewBox="0 0 8 20"><path d="M0 .5h8L0 20" stroke="#000" fill="none"/></svg>
      <span class="flex-1 border-t border-black"></span>
    </div>
    <section class="mt-1.5 flex flex-1 flex-col">
      <div class="flex h-[26px] shrink-0 items-center bg-linear-to-r from-[#c0cedb] to-[#d9e5f1] pl-1 pr-px"><h2 class="flex-1 text-[15px] text-[#4d5966]">Messages</h2><button aria-label="Pin messages" class="mr-[7px]"><svg class="h-[10px] w-2"><use href="#pin"/></svg></button><button aria-label="Close messages"><svg class="size-2" viewBox="0 0 8 8"><path d="m0 0 8 8M8 0 0 8" stroke="#000" stroke-width="1.600"/></svg></button></div>
      <div class="flex-1 border-l-2 border-t border-[#707070] bg-[#a0a0a0]">
        <table class="w-[969px] table-fixed border-collapse leading-[21px]">
          <colgroup><col class="w-[49px]"><col class="w-[465px]"><col class="w-[305px]"><col class="w-[150px]"></colgroup>
          <thead><tr class="h-[22px] bg-[#f0f0f0] text-left">
            <th aria-label="Type" class="border-b border-r border-[#707070] p-0"></th><th class="border-b border-r border-[#707070] p-0 pl-1 font-normal">Text</th><th class="border-b border-r border-[#707070] p-0 pl-1 font-normal">Association</th><th class="border-b border-r border-[#707070] p-0 pl-1 font-normal">Timestamp</th>
          </tr></thead>
        </table>
      </div>
    </section>
  </main>
</div>

<footer class="flex h-[28px] shrink-0 gap-[3px] border-b border-black bg-[#f0f0f0] pb-px leading-[26px]">
  <div class="w-[431px] shrink-0 border-l border-t border-[#a0a0a0] pl-px">Press F1 for Help</div>
  <div class="w-[205px] shrink-0 border-l border-t border-[#a0a0a0]"></div>
  <div class="flex w-[173px] shrink-0 items-center border-l border-t border-[#a0a0a0] pl-px"><svg class="mr-1 h-[18px] w-4" viewBox="0 0 16 18"><path d="M1 5h13v9H6l-3 3.500V14H1z" fill="#f6d84c" stroke="#9a7a10"/><ellipse cx="10" cy="6" rx="3" ry="5" fill="none" stroke="#111" stroke-width="1.500"/></svg>No Messages</div>
  <div class="w-[380px] shrink-0 border-l border-t border-[#a0a0a0] pl-px">No Selection</div>
  <div class="flex min-w-0 flex-1 overflow-hidden whitespace-nowrap border-l border-t border-[#a0a0a0] pl-0.5"><span class="w-[211px] shrink-0">Metric (mm, kg, N, s, mV, mA)</span><span class="w-[71px] shrink-0">Degrees</span><span class="w-[50px] shrink-0">rad/s</span><span class="w-[33px] shrink-0">Kelvi</span><svg class="ml-auto mt-3 size-[13px] shrink-0" viewBox="0 0 13 13"><path d="M1 13 13 1M5 13l8-8M9 13l4-4" stroke="#a0a0a0" stroke-width="1.500"/></svg></div>
</footer>
</body>
</html>
